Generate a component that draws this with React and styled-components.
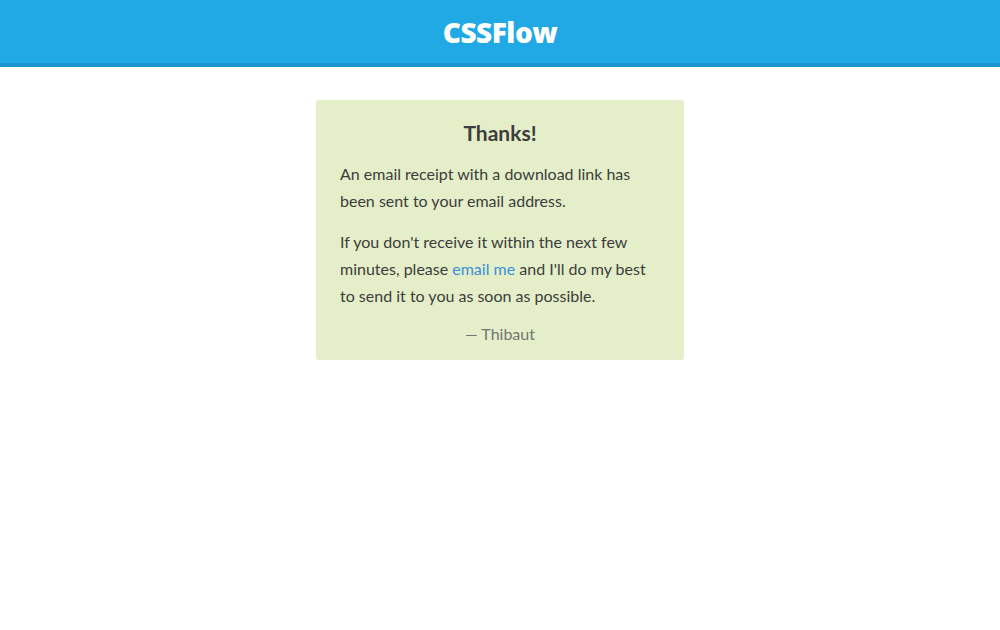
import React from 'react';
import styled, { createGlobalStyle } from 'styled-components';

const GlobalStyle = createGlobalStyle`
  body {
    margin: 0;
    background: #fff;
    font-family: Lato, "Open Sans", sans-serif;
  }
`;

const Header = styled.header`
  height: 63px;
  background: #20a9e4;
  border-bottom: 4px solid #1b94cf;
  display: flex;
  align-items: center;
  justify-content: center;
`;

const Logo = styled.h1`
  margin: 0;
  color: #fff;
  font-family: "Open Sans", sans-serif;
  font-weight: 800;
  font-size: 28px;
  letter-spacing: -0.5px;
`;

const Main = styled.main`
  display: flex;
  justify-content: center;
  padding-top: 33px;
`;

const Card = styled.div`
  width: 320px;
  padding: 20px 24px 13px;
  background: #e4eec8;
  border-radius: 3px;
  color: #3d3d3d;
`;

const Title = styled.h2`
  margin: 0 0 14px;
  text-align: center;
  font-size: 21px;
  font-weight: 700;
  line-height: 26px;
`;

const Para = styled.p`
  margin: 0 0 14px;
  font-size: 16px;
  line-height: 27px;
`;

const Link = styled.a`
  color: #3b8ed8;
  text-decoration: none;
`;

const Signature = styled.p`
  margin: -3px 0 0;
  text-align: center;
  color: #757575;
  font-size: 16px;
  line-height: 27px;
`;

export default function App() {
  return (
    <>
      <GlobalStyle />
      <Header>
        <Logo>CSSFlow</Logo>
      </Header>
      <Main>
        <Card>
          <Title>Thanks!</Title>
          <Para>An email receipt with a download link has been sent to your email address.</Para>
          <Para>
            If you don't receive it within the next few minutes, please <Link href="#">email me</Link> and I'll do my best to send it to you as soon as possible.
          </Para>
          <Signature>— Thibaut</Signature>
        </Card>
      </Main>
    </>
  );
}
